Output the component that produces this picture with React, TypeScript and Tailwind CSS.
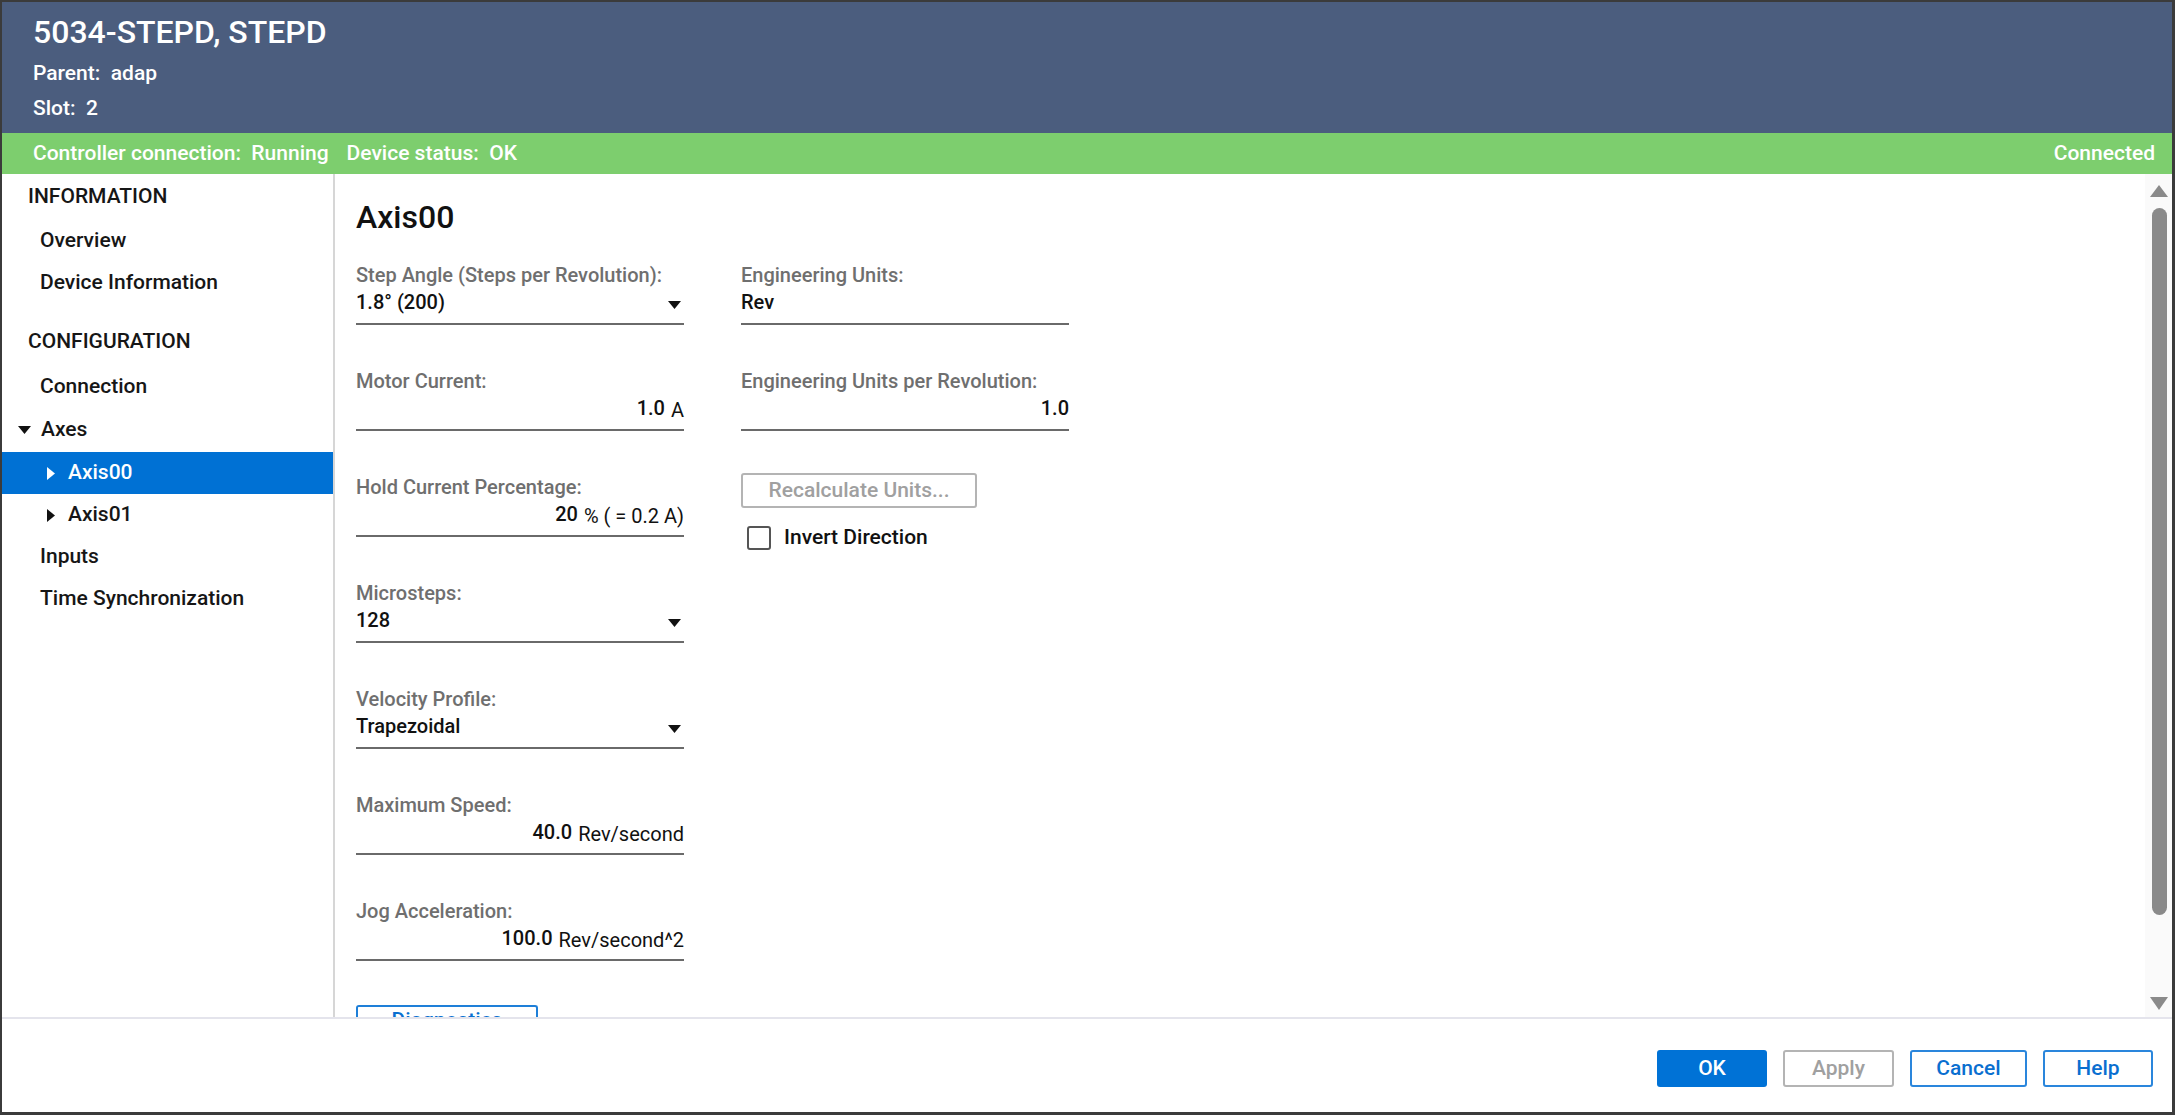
import React from 'react';

const Down = ({ className = '' }: { className?: string }) => (
  <svg width="13" height="8" viewBox="0 0 13 8" className={className}>
    <polygon points="0,0 13,0 6.5,8" fill="#111" />
  </svg>
);

const Right = ({ color = '#111' }: { color?: string }) => (
  <svg width="8" height="13" viewBox="0 0 8 13">
    <polygon points="0,0 8,6.5 0,13" fill={color} />
  </svg>
);

interface FieldProps {
  label: string;
  value: React.ReactNode;
  unit?: React.ReactNode;
  select?: boolean;
  right?: boolean;
}

function Field({ label, value, unit, select, right }: FieldProps) {
  return (
    <div className="w-[328px]">
      <div className="h-[24px] leading-[24px] text-[20px] font-medium text-[#6f6f6f]">{label}</div>
      <div className="h-[38px] border-b-2 border-[#6a6a6a] flex items-start">
        {right ? (
          <div className="flex-1 flex justify-end items-baseline h-[30px] leading-[30px] gap-[6px]">
            <span className="text-[20px] font-medium text-[#111]">{value}</span>
            {unit && <span className="relative top-[2px] text-[20px] text-[#111]">{unit}</span>}
          </div>
        ) : (
          <div className="flex-1 flex justify-between items-center h-[30px]">
            <span className="text-[20px] leading-[30px] font-medium text-[#111]">{value}</span>
            {select && <Down className="mr-[3px] mt-[6px]" />}
          </div>
        )}
      </div>
    </div>
  );
}

const NavHeader = ({ text, className = '' }: { text: string; className?: string }) => (
  <div className={`h-[42px] flex items-center pl-[26px] text-[21px] font-medium text-[#161616] ${className}`}>{text}</div>
);

const NavItem = ({ text, className = '' }: { text: string; className?: string }) => (
  <div className={`h-[42px] flex items-center pl-[38px] text-[21px] font-medium text-[#161616] ${className}`}>{text}</div>
);

export default function App() {
  return (
    <div className="h-[1115px] w-full flex flex-col bg-white overflow-hidden border-t-2 border-l-2 border-r-[3px] border-b-[3px] border-[#3b3b3b] font-['Roboto',sans-serif]">
      {/* Header */}
      <div className="h-[131px] shrink-0 bg-[#4b5d7e] text-white pl-[31px]">
        <div className="mt-[10px] h-[40px] leading-[40px] text-[32px] font-medium">5034-STEPD, STEPD</div>
        <div className="mt-[7px] h-[28px] leading-[28px] text-[21px] font-medium">Parent:&nbsp; adap</div>
        <div className="mt-[7px] h-[28px] leading-[28px] text-[21px] font-medium">Slot:&nbsp; 2</div>
      </div>

      {/* Status bar */}
      <div className="h-[41px] shrink-0 bg-[#7dce6e] text-white flex items-center justify-between pl-[31px] pr-[17px] text-[21px] font-medium">
        <div className="flex gap-[18px]">
          <span>Controller connection:&nbsp; Running</span>
          <span>Device status:&nbsp; OK</span>
        </div>
        <span>Connected</span>
      </div>

      {/* Body */}
      <div className="flex-1 flex min-h-0">
        {/* Sidebar */}
        <div className="w-[333px] shrink-0 border-r-2 border-[#d6d6d6] pt-[2px]">
          <NavHeader text="INFORMATION" />
          <NavItem text="Overview" className="mt-[2px]" />
          <NavItem text="Device Information" />
          <NavHeader text="CONFIGURATION" className="mt-[17px]" />
          <NavItem text="Connection" className="mt-[3px]" />
          <div className="mt-[1px] h-[42px] flex items-center pl-[16px] gap-[10px] text-[21px] font-medium text-[#161616]">
            <Down />
            <span>Axes</span>
          </div>
          <div className="mt-[1px] h-[42px] flex items-center pl-[45px] gap-[13px] text-[21px] font-medium text-white bg-[#0071d4]">
            <Right color="#fff" />
            <span>Axis00</span>
          </div>
          <div className="h-[42px] flex items-center pl-[45px] gap-[13px] text-[21px] font-medium text-[#161616]">
            <Right />
            <span>Axis01</span>
          </div>
          <NavItem text="Inputs" />
          <NavItem text="Time Synchronization" />
        </div>

        {/* Content */}
        <div className="flex-1 min-w-0 overflow-hidden pl-[21px] pt-[24px]">
          <div className="h-[38px] leading-[38px] text-[32px] font-medium text-[#111]">Axis00</div>
          <div className="mt-[27px] flex gap-[57px] items-start">
            <div className="flex flex-col gap-[44px]">
              <Field label="Step Angle (Steps per Revolution):" value="1.8° (200)" select />
              <Field label="Motor Current:" value="1.0" unit="A" right />
              <Field label="Hold Current Percentage:" value="20" unit="% ( = 0.2 A)" right />
              <Field label="Microsteps:" value="128" select />
              <Field label="Velocity Profile:" value="Trapezoidal" select />
              <Field label="Maximum Speed:" value="40.0" unit="Rev/second" right />
              <Field label="Jog Acceleration:" value="100.0" unit="Rev/second^2" right />
              <button className="w-[182px] h-[28px] leading-[24px] border-2 border-b-0 border-[#1e7fd8] rounded-t-[3px] text-[#0a6fd0] text-[21px] font-medium">
                Diagnostics
              </button>
            </div>
            <div className="flex flex-col">
              <div className="flex flex-col gap-[44px]">
                <Field label="Engineering Units:" value="Rev" />
                <Field label="Engineering Units per Revolution:" value="1.0" right />
              </div>
              <button className="mt-[42px] w-[236px] h-[35px] border-2 border-[#b4b4b4] rounded-[3px] text-[#a0a0a0] text-[21px] font-medium">
                Recalculate Units...
              </button>
              <div className="mt-[14px] flex items-center pl-[6px] gap-[13px]">
                <div className="w-[24px] h-[24px] border-2 border-[#555] rounded-[3px]" />
                <span className="text-[21px] font-medium text-[#111]">Invert Direction</span>
              </div>
            </div>
          </div>
        </div>

        {/* Scrollbar */}
        <div className="w-[27px] shrink-0 bg-[#fafafa] flex flex-col items-center pt-[11px] pb-[7px] pl-[1px]">
          <svg width="18" height="12" viewBox="0 0 18 12">
            <polygon points="9,0 18,12 0,12" fill="#8a8a8a" />
          </svg>
          <div className="mt-[11px] w-[15px] h-[707px] rounded-full bg-[#8a8a8a]" />
          <div className="flex-1" />
          <svg width="18" height="13" viewBox="0 0 18 13">
            <polygon points="0,0 18,0 9,13" fill="#8a8a8a" />
          </svg>
        </div>
      </div>

      {/* Footer */}
      <div className="h-[2px] shrink-0 bg-[#e4e4ec]" />
      <div className="h-[93px] shrink-0 flex justify-end items-start pt-[31px] pr-[19px] gap-[16px] text-[21px] font-medium">
        <button className="w-[110px] h-[37px] rounded-[3px] bg-[#0072d6] text-white">OK</button>
        <button className="w-[111px] h-[37px] rounded-[3px] border-2 border-[#b4b4b4] text-[#a0a0a0]">Apply</button>
        <button className="w-[117px] h-[37px] rounded-[3px] border-2 border-[#2a86dc] text-[#0a6fd0]">Cancel</button>
        <button className="w-[110px] h-[37px] rounded-[3px] border-2 border-[#2a86dc] text-[#0a6fd0]">Help</button>
      </div>
    </div>
  );
}
